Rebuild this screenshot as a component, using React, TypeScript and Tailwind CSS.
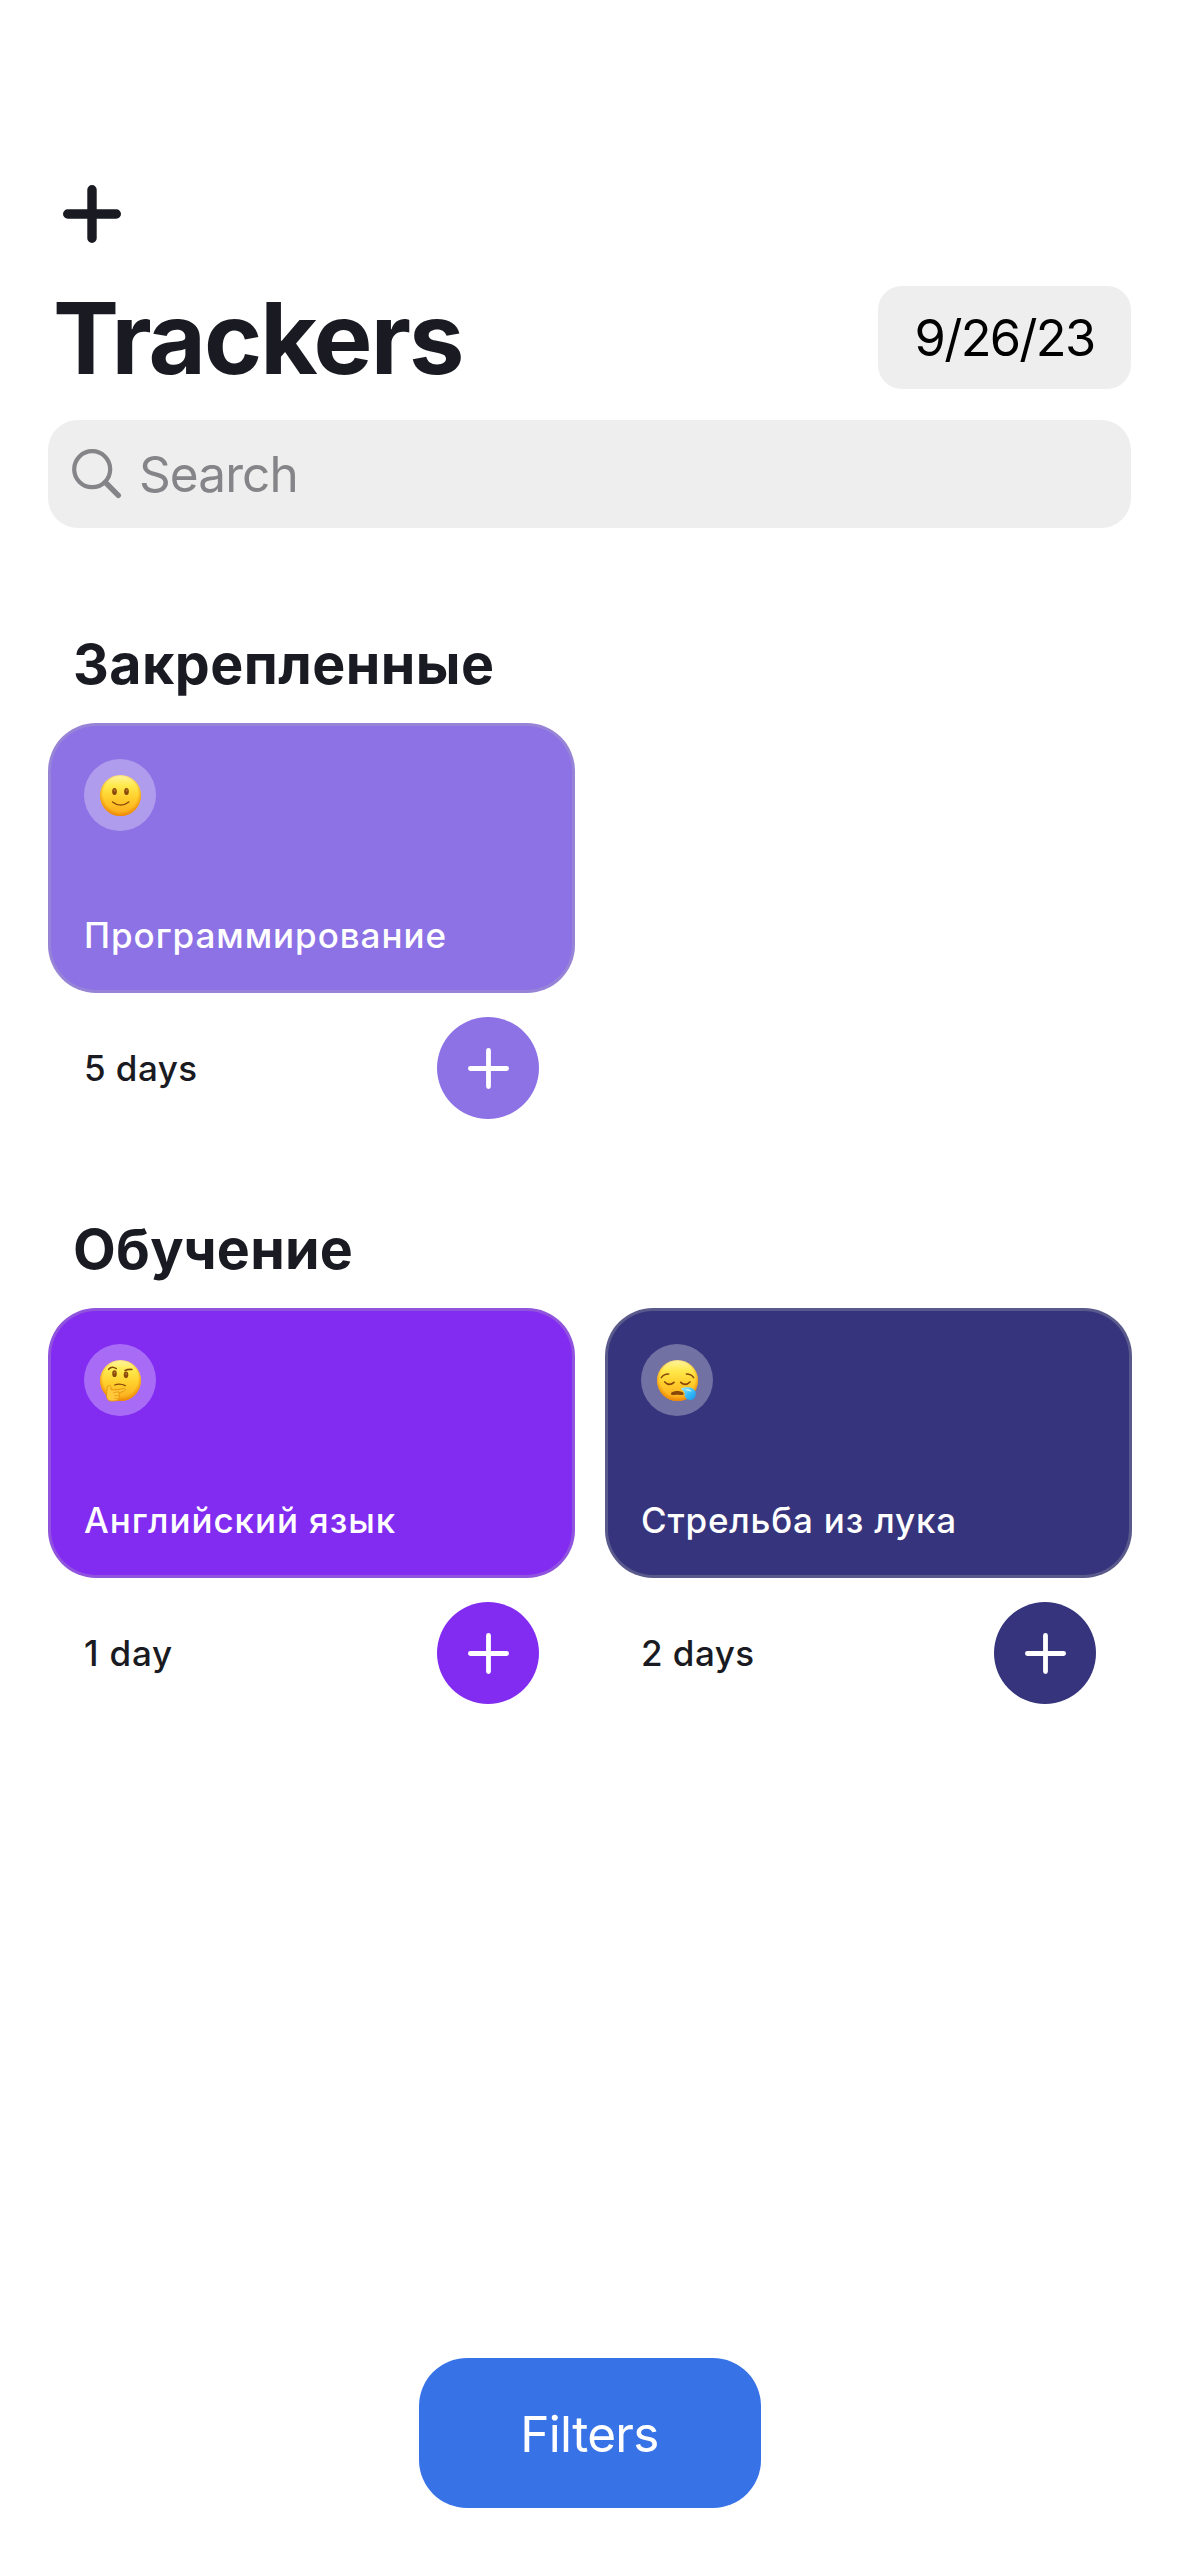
import type { ReactNode } from 'react';

function Plus({ size, stroke, className }: { size: number; stroke: number; className?: string }) {
  const mid = size / 2;
  return (
    <svg width={size} height={size} viewBox={`0 0 ${size} ${size}`} className={className} aria-hidden="true">
      <path
        d={`M${mid} ${stroke / 2}V${size - stroke / 2}M${stroke / 2} ${mid}H${size - stroke / 2}`}
        stroke="currentColor"
        strokeWidth={stroke}
        strokeLinecap="round"
        fill="none"
      />
    </svg>
  );
}

function SearchIcon() {
  return (
    <svg width="50" height="50" viewBox="0 0 50 50" className="shrink-0 text-[#858589]" fill="none" stroke="currentColor" aria-hidden="true">
      <circle cx="20.2" cy="20.2" r="18" strokeWidth="4.2" />
      <path d="M33.5 33.5L46.3 46.3" strokeWidth="5.4" strokeLinecap="round" />
    </svg>
  );
}

function Face({ id, label, children }: { id: string; label: string; children: ReactNode }) {
  return (
    <svg width="72" height="72" viewBox="12 12 216 216" role="img" aria-label={label}>
      <defs>
        <linearGradient id={`${id}-base`} x1="0" y1="0" x2="0" y2="1">
          <stop offset="0" stopColor="#fff3a0" />
          <stop offset="0.25" stopColor="#ffea4e" />
          <stop offset="0.55" stopColor="#ffcf2d" />
          <stop offset="1" stopColor="#fba81c" />
        </linearGradient>
        <radialGradient id={`${id}-edge`} cx="0.5" cy="0.46" r="0.54">
          <stop offset="0.78" stopColor="#f08a00" stopOpacity="0" />
          <stop offset="1" stopColor="#e87d00" stopOpacity="0.85" />
        </radialGradient>
        <linearGradient id={`${id}-drop`} x1="0" y1="0" x2="1" y2="1">
          <stop offset="0" stopColor="#a5ecff" />
          <stop offset="0.5" stopColor="#3cc0fb" />
          <stop offset="1" stopColor="#1792ea" />
        </linearGradient>
      </defs>
      <circle cx="121.5" cy="121.5" r="61.5" fill={`url(#${id}-base)`} />
      <circle cx="121.5" cy="121.5" r="61.5" fill={`url(#${id}-edge)`} />
      {children}
    </svg>
  );
}

function SmileFace() {
  return (
    <Face id="smile" label="🙂">
      <ellipse cx="103.5" cy="109.5" rx="7" ry="10.5" fill="#87480a" />
      <ellipse cx="139.5" cy="109.5" rx="7" ry="10.5" fill="#87480a" />
      <ellipse cx="104" cy="106.5" rx="2.6" ry="3.8" fill="#b9792c" />
      <ellipse cx="140" cy="106.5" rx="2.6" ry="3.8" fill="#b9792c" />
      <path d="M97.5 141Q121.5 160 146.5 141" fill="none" stroke="#87480a" strokeWidth="4" strokeLinecap="round" />
    </Face>
  );
}

function ThinkingFace() {
  return (
    <Face id="think" label="🤔">
      <ellipse cx="103.5" cy="101" rx="6.8" ry="10" fill="#87480a" />
      <ellipse cx="138" cy="104.5" rx="6.8" ry="10" fill="#87480a" />
      <ellipse cx="104" cy="98" rx="2.5" ry="3.6" fill="#b9792c" />
      <ellipse cx="138.5" cy="101.5" rx="2.5" ry="3.6" fill="#b9792c" />
      <path d="M86 88Q95 77 109 86" fill="none" stroke="#87480a" strokeWidth="4.5" strokeLinecap="round" />
      <path d="M135 91.5Q144 87 156 88.5" fill="none" stroke="#87480a" strokeWidth="4.5" strokeLinecap="round" />
      <path d="M104 135Q119 129 136 137" fill="none" stroke="#87480a" strokeWidth="3.6" strokeLinecap="round" />
      <path
        d="M85 137C91 134 94 142 93 149C104 152 119 148 130 146C138 145 138 151 130 154L115 159C121 161 118 166 117 169C119 173 116 177 114 179C110 184 96 184 88 182C80 179 79 169 80 159C82 151 79 141 85 137Z"
        fill="#ffc93b"
        stroke="#e38e0c"
        strokeWidth="2.5"
        strokeLinejoin="round"
      />
      <path d="M101 158L117 155M104 167H116M104 175H114" fill="none" stroke="#e38e0c" strokeWidth="2" strokeLinecap="round" />
    </Face>
  );
}

function SleepyFace() {
  return (
    <Face id="sleepy" label="😪">
      <path d="M73 113Q80 102 95 102" fill="none" stroke="#87480a" strokeWidth="4.5" strokeLinecap="round" />
      <path d="M148 102Q163 102 170 113" fill="none" stroke="#87480a" strokeWidth="4.5" strokeLinecap="round" />
      <path d="M83 126Q97 140 111 127" fill="none" stroke="#87480a" strokeWidth="5" strokeLinecap="round" />
      <path d="M131 127Q145 140 159 126" fill="none" stroke="#87480a" strokeWidth="5" strokeLinecap="round" />
      <path d="M102 161C103 150 139 150 140 161C140 168 131 164 121 164C111 164 102 168 102 161Z" fill="#87480a" />
      <path d="M131 146C143 141 158 140 168 146C181 154 179 176 163 180C148 181 142 172 143 160C141 154 137 150 131 146Z" fill="url(#sleepy-drop)" />
      <path d="M145 149C154 146 161 149 165 155C157 152 151 153 145 149Z" fill="#d5f7ff" opacity="0.85" />
    </Face>
  );
}

type Tracker = {
  title: string;
  days: string;
  color: string;
  titleSpacing: string;
  daysSpacing: string;
  face: ReactNode;
};

function TrackerCard({ tracker }: { tracker: Tracker }) {
  return (
    <article className="flex flex-col">
      <div
        className={`flex h-[270px] flex-col justify-between rounded-[48px] border-[3px] border-[#aeafb4]/30 p-[33px] ${tracker.color}`}
      >
        <div className="size-[72px] rounded-full bg-white/30">{tracker.face}</div>
        <h3 className={`whitespace-nowrap text-[35px] leading-[44px] font-medium text-white ${tracker.titleSpacing}`}>{tracker.title}</h3>
      </div>
      <div className="mt-6 flex h-[102px] items-center justify-between px-9">
        <span className={`text-[35px] leading-[44px] font-medium text-[#1a1b22] ${tracker.daysSpacing}`}>{tracker.days}</span>
        <button type="button" className={`flex size-[102px] items-center justify-center rounded-full text-white ${tracker.color}`}>
          <Plus size={41} stroke={4.8} />
        </button>
      </div>
    </article>
  );
}

function Section({ title, spacing, trackers }: { title: string; spacing: string; trackers: Tracker[] }) {
  return (
    <section>
      <h2 className={`mb-[26px] pl-[25px] text-[55.5px] leading-[67px] font-bold text-[#1a1b22] ${spacing}`}>{title}</h2>
      <div className="grid grid-cols-[527px_527px] gap-[30px]">
        {trackers.map((tracker) => (
          <TrackerCard key={tracker.title} tracker={tracker} />
        ))}
      </div>
    </section>
  );
}

const pinned: Tracker[] = [
  {
    title: 'Программирование',
    days: '5 days',
    color: 'bg-[#8d72e6]',
    titleSpacing: 'tracking-[0.95px]',
    daysSpacing: 'tracking-[0.45px]',
    face: <SmileFace />,
  },
];

const learning: Tracker[] = [
  {
    title: 'Английский язык',
    days: '1 day',
    color: 'bg-[#832cf1]',
    titleSpacing: 'tracking-[0.92px]',
    daysSpacing: 'tracking-[0.8px]',
    face: <ThinkingFace />,
  },
  {
    title: 'Стрельба из лука',
    days: '2 days',
    color: 'bg-[#35347c]',
    titleSpacing: 'tracking-[0.8px]',
    daysSpacing: 'tracking-[0.45px]',
    face: <SleepyFace />,
  },
];

export default function App() {
  return (
    <div className="flex h-[2556px] w-[1179px] flex-col bg-white px-12 pt-[185px] pb-12 font-['Inter',sans-serif]">
      <button type="button" className="ml-[15px] size-[58px] text-[#1a1b22]" aria-label="Add tracker">
        <Plus size={58} stroke={9.4} />
      </button>

      <header className="mt-[43px] flex h-[103px] items-center justify-between">
        <h1 className="pt-[2px] pl-[5px] text-[99px] leading-[103px] font-bold tracking-[-1.95px] text-[#1a1b22]">Trackers</h1>
        <div className="flex h-[103px] w-[253px] items-center justify-center rounded-[24px] bg-[#eeeeee] text-[50.5px] leading-[60px] tracking-[-1.7px] text-black">
          9/26/23
        </div>
      </header>

      <label className="mt-[31px] flex h-[108px] items-center rounded-[30px] bg-[#eeeeee] pl-6">
        <SearchIcon />
        <span className="pl-[17px] text-[49.5px] leading-[60px] tracking-[-0.9px] text-[#858589]">Search</span>
      </label>

      <main className="mt-[102px] flex flex-col gap-24">
        <Section title="Закрепленные" spacing="tracking-[0.45px]" trackers={pinned} />
        <Section title="Обучение" spacing="tracking-[0.25px]" trackers={learning} />
      </main>

      <button
        type="button"
        className="mt-auto flex h-[150px] w-[342px] items-center justify-center self-center rounded-[48px] bg-[#3772e7] pt-[2px] text-[49.5px] leading-[60px] tracking-[-0.7px] text-white"
      >
        Filters
      </button>
    </div>
  );
}
